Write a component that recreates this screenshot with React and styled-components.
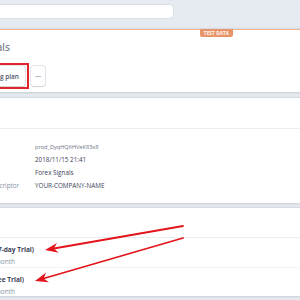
import React from "react"
import styled, { createGlobalStyle } from "styled-components"

const GlobalStyle = createGlobalStyle`
  html, body {
    margin: 0;
    padding: 0;
    background: #e6ebf1;
  }
  body {
    font-family: "Open Sans", "Noto Sans", sans-serif;
  }
`

const Page = styled.div`
  position: relative;
  width: 300px;
  height: 300px;
  overflow: hidden;
  background: #e6ebf1;
`

const SearchRow = styled.div`
  padding-top: 5px;
  height: 13px;
`

const Search = styled.div`
  margin-left: -30px;
  width: 203px;
  height: 13px;
  background: #fff;
  border-radius: 4px;
  box-shadow: 0 0 0 1px rgba(60, 66, 87, 0.06);
`

const Card = styled.section`
  position: relative;
  margin-top: ${p => p.$gap}px;
  height: ${p => p.$height}px;
  background: #fff;
  border-top: 1px solid ${p => (p.$test ? "#f3b892" : "#fff")};
  box-shadow: 0 1px 2px rgba(60, 66, 87, 0.18), 0 -1px 1px rgba(60, 66, 87, 0.08);
  box-sizing: border-box;
`

const Badge = styled.div`
  position: absolute;
  left: 200px;
  top: -1px;
  width: 33px;
  height: 8px;
  background: #e8956a;
  color: #fff;
  font-size: 4.5px;
  font-weight: 700;
  letter-spacing: 0.2px;
  line-height: 8px;
  text-align: center;
  border-radius: 0 0 2px 2px;
`

// Text whose right edge sits at a given x; the rest runs off the left side
const Clip = styled.div`
  width: ${p => p.$end}px;
  display: flex;
  justify-content: flex-end;
  white-space: nowrap;
`

const Title = styled.div`
  padding-top: 8px;
  height: 18px;
  font-size: 10.5px;
  line-height: 18px;
  color: #5b6275;
`

const Actions = styled.div`
  display: flex;
  align-items: center;
  gap: 2px;
  margin-top: 7px;
`

const Highlight = styled.div`
  margin-left: -70px;
  width: 99px;
  height: 26px;
  box-sizing: border-box;
  border: 2px solid #e1252b;
  padding: 1px 2px;
`

const Button = styled.div`
  height: 20px;
  box-sizing: border-box;
  display: flex;
  align-items: center;
  justify-content: ${p => (p.$center ? "center" : "flex-end")};
  padding: ${p => (p.$center ? "0" : "0 6px 0 0")};
  width: ${p => (p.$w ? `${p.$w}px` : "auto")};
  background: #fff;
  border-radius: 3px;
  box-shadow: 0 0 0 1px rgba(60, 66, 87, 0.14), 0 1px 1px rgba(0, 0, 0, 0.08);
  font-size: 6.5px;
  font-weight: 600;
  color: #4f566b;
  white-space: nowrap;
`

const Divider = styled.div`
  height: ${p => p.$top}px;
  border-bottom: 1px solid #ebeef1;
  box-sizing: border-box;
`

const Details = styled.div`
  padding-top: 11px;
  margin-left: -43px;
`

const DetailRow = styled.div`
  display: grid;
  grid-template-columns: 60px 1fr;
  column-gap: 18px;
  height: 13px;
  align-items: center;
  font-size: 6.3px;
`

const Label = styled.div`
  color: #8792a2;
  white-space: nowrap;
`

const Value = styled.div`
  color: ${p => (p.$mono ? "#697386" : "#3c4257")};
  font-size: ${p => (p.$mono ? "5.6px" : "6.3px")};
  white-space: nowrap;
`

const PlanRow = styled.div`
  height: ${p => p.$height}px;
  padding-top: 5px;
  box-sizing: border-box;
  border-bottom: ${p => (p.$last ? "none" : "1px solid #f3f4f6")};
`

const PlanName = styled(Clip)`
  height: 12px;
  align-items: center;
  font-size: 6.5px;
  font-weight: 700;
  color: #3c4257;
`

const PlanPrice = styled(Clip)`
  height: 12px;
  align-items: center;
  font-size: 6.5px;
  color: #8792a2;
`

const Overlay = styled.svg`
  position: absolute;
  left: 0;
  top: 0;
  pointer-events: none;
`

const Arrow = ({ tail, notch, tip, barbs }) => (
  <g>
    <line x1={tail[0]} y1={tail[1]} x2={notch[0]} y2={notch[1]} stroke="#e3141b" strokeWidth="1.8" strokeLinecap="round" />
    <polygon
      points={`${tip.join(",")} ${barbs[0].join(",")} ${notch.join(",")} ${barbs[1].join(",")}`}
      fill="#e3141b"
    />
  </g>
)

const details = [
  { label: "ID", value: "prod_DyqHQ6HVeK83x8", mono: true },
  { label: "Created", value: "2018/11/15 21:41" },
  { label: "Name", value: "Forex Signals" },
  { label: "Statement descriptor", value: "YOUR-COMPANY-NAME" },
]

const plans = [
  { name: "Forex Signals Monthly (7-day Trial)", end: 34, price: "$49.00 USD / month", height: 30 },
  { name: "Forex Signals Monthly (Free Trial)", end: 24, price: "$49.00 USD / month", height: 28 },
]

export default function App() {
  return (
    <Page>
      <GlobalStyle />
      <SearchRow>
        <Search />
      </SearchRow>

      <Card $gap={11} $height={63} $test>
        <Badge>TEST DATA</Badge>
        <Title>
          <Clip $end={10}>Forex Signals</Clip>
        </Title>
        <Actions>
          <Highlight>
            <Button>Add pricing plan</Button>
          </Highlight>
          <Button $center $w={14}>···</Button>
        </Actions>
      </Card>

      <Card $gap={6} $height={105}>
        <Divider $top={30} />
        <Details>
          {details.map(d => (
            <DetailRow key={d.label}>
              <Label>{d.label}</Label>
              <Value $mono={d.mono}>{d.value}</Value>
            </DetailRow>
          ))}
        </Details>
      </Card>

      <Card $gap={5} $height={88}>
        <Divider $top={29} />
        {plans.map((p, i) => (
          <PlanRow key={p.name} $height={p.height} $last={i === plans.length - 1}>
            <PlanName $end={p.end}>{p.name}</PlanName>
            <PlanPrice $end={15}>{p.price}</PlanPrice>
          </PlanRow>
        ))}
      </Card>

      <Overlay width="300" height="300" viewBox="0 0 300 300">
        <Arrow tail={[183, 226]} notch={[53.9, 248.5]} tip={[45, 250]} barbs={[[58.7, 252.7], [56.9, 242.9]]} />
        <Arrow tail={[183, 238]} notch={[43.6, 278.5]} tip={[35, 281]} barbs={[[48.9, 282.2], [46.1, 272.6]]} />
      </Overlay>
    </Page>
  )
}
